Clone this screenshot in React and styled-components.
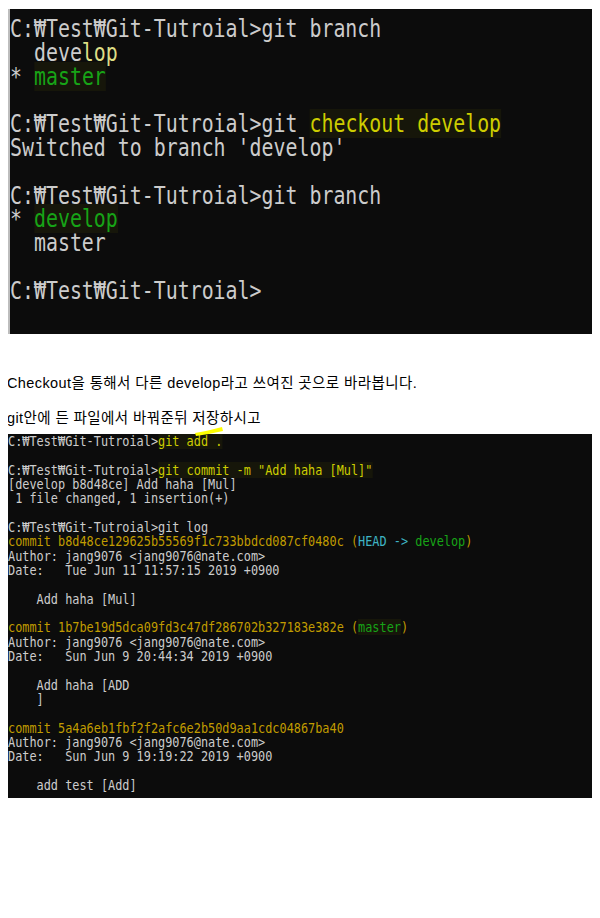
import React from 'react';
import styled, { createGlobalStyle } from 'styled-components';

const GlobalStyle = createGlobalStyle`
    body {
        margin: 8px;
        background: #ffffff;
        font-family: "Liberation Sans", "Noto Sans CJK KR", sans-serif;
    }
`;

const Page = styled.div`
    display: flex;
    flex-direction: column;
    width: 587px;
`;

const Terminal = styled.div`
    box-sizing: border-box;
    width: 587px;
    height: ${({ $height }) => $height}px;
    margin-top: ${({ $top }) => $top}px;
    padding-top: ${({ $padTop }) => $padTop}px;
    background-color: #0c0c0c;
    border-left: ${({ $edge }) => ($edge ? '2px solid #bdbdbd' : 'none')};
    overflow: hidden;
`;

const Screen = styled.div`
    font-family: "DejaVu Sans Mono", "Liberation Mono", monospace;
    font-size: ${({ $font }) => $font}px;
    line-height: ${({ $lh }) => $lh}px;
    color: #cccccc;
    white-space: pre;
    transform: scaleX(${({ $scale }) => $scale});
    transform-origin: left top;
`;

const Line = styled.div``;

const colors = {
    yellow: '#cdcd00',
    pale: '#dede86',
    green: '#17a417',
    dark: '#c19c00',
    cyan: '#3fb4c4',
};

const Ink = styled.span`
    color: ${({ $c }) => colors[$c]};
    background-color: ${({ $glow }) => ($glow ? '#16160a' : 'transparent')};
`;

const Para = styled.p`
    margin: ${({ $top }) => $top}px 0 0 -1px;
    font-size: 14.5px;
    letter-spacing: 0.4px;
    line-height: 20px;
    color: #000000;
    position: relative;
    z-index: 1;
`;

const Swoosh = styled.svg`
    position: absolute;
    left: 187px;
    bottom: -8px;
`;

const P = '₩';
const prompt = `C:${P}Test${P}Git-Tutroial>`;

const App = () => {
    return (
        <Page>
            <GlobalStyle />
            <Terminal $height={325} $top={1} $padTop={8} $edge>
                <Screen $font={24.5} $lh={23.8} $scale={0.812}>
                    <Line>{prompt}git branch</Line>
                    <Line>  deve<Ink $c="pale">lop</Ink></Line>
                    <Line>* <Ink $c="green" $glow>master</Ink></Line>
                    <Line> </Line>
                    <Line>{prompt}git <Ink $c="yellow" $glow>checkout develop</Ink></Line>
                    <Line>Switched to branch 'develop'</Line>
                    <Line> </Line>
                    <Line>{prompt}git branch</Line>
                    <Line>* <Ink $c="green" $glow>develop</Ink></Line>
                    <Line>  master</Line>
                    <Line> </Line>
                    <Line>{prompt}</Line>
                </Screen>
            </Terminal>

            <Para $top={39}>Checkout을 통해서 다른 develop라고 쓰여진 곳으로 바라봅니다.</Para>
            <Para $top={15}>
                git안에 든 파일에서 바꿔준뒤 저장하시고
                <Swoosh width="30" height="9" viewBox="0 0 30 9">
                    <path d="M1 6 C8 5 17 3 28 0 L29 4 C19 6 10 8 2 9 Z" fill="#ffff00" />
                </Swoosh>
            </Para>

            <Terminal $height={364} $top={6} $padTop={0}>
                <Screen $font={13.5} $lh={14.33} $scale={0.879}>
                    <Line>{prompt}<Ink $c="yellow" $glow>git add .</Ink></Line>
                    <Line> </Line>
                    <Line>{prompt}<Ink $c="yellow" $glow>git commit -m "Add haha [Mul]"</Ink></Line>
                    <Line>[develop b8d48ce] Add haha [Mul]</Line>
                    <Line> 1 file changed, 1 insertion(+)</Line>
                    <Line> </Line>
                    <Line>{prompt}git log</Line>
                    <Line>
                        <Ink $c="dark">commit b8d48ce129625b55569f1c733bbdcd087cf0480c (</Ink>
                        <Ink $c="cyan">HEAD -&gt; </Ink>
                        <Ink $c="green">develop</Ink>
                        <Ink $c="dark">)</Ink>
                    </Line>
                    <Line>Author: jang9076 &lt;jang9076@nate.com&gt;</Line>
                    <Line>Date:   Tue Jun 11 11:57:15 2019 +0900</Line>
                    <Line> </Line>
                    <Line>    Add haha [Mul]</Line>
                    <Line> </Line>
                    <Line>
                        <Ink $c="dark">commit 1b7be19d5dca09fd3c47df286702b327183e382e (</Ink>
                        <Ink $c="green" $glow>master</Ink>
                        <Ink $c="dark">)</Ink>
                    </Line>
                    <Line>Author: jang9076 &lt;jang9076@nate.com&gt;</Line>
                    <Line>Date:   Sun Jun 9 20:44:34 2019 +0900</Line>
                    <Line> </Line>
                    <Line>    Add haha [ADD</Line>
                    <Line>    ]</Line>
                    <Line> </Line>
                    <Line><Ink $c="dark">commit 5a4a6eb1fbf2f2afc6e2b50d9aa1cdc04867ba40</Ink></Line>
                    <Line>Author: jang9076 &lt;jang9076@nate.com&gt;</Line>
                    <Line>Date:   Sun Jun 9 19:19:22 2019 +0900</Line>
                    <Line> </Line>
                    <Line>    add test [Add]</Line>
                </Screen>
            </Terminal>
        </Page>
    );
};

export default App;
